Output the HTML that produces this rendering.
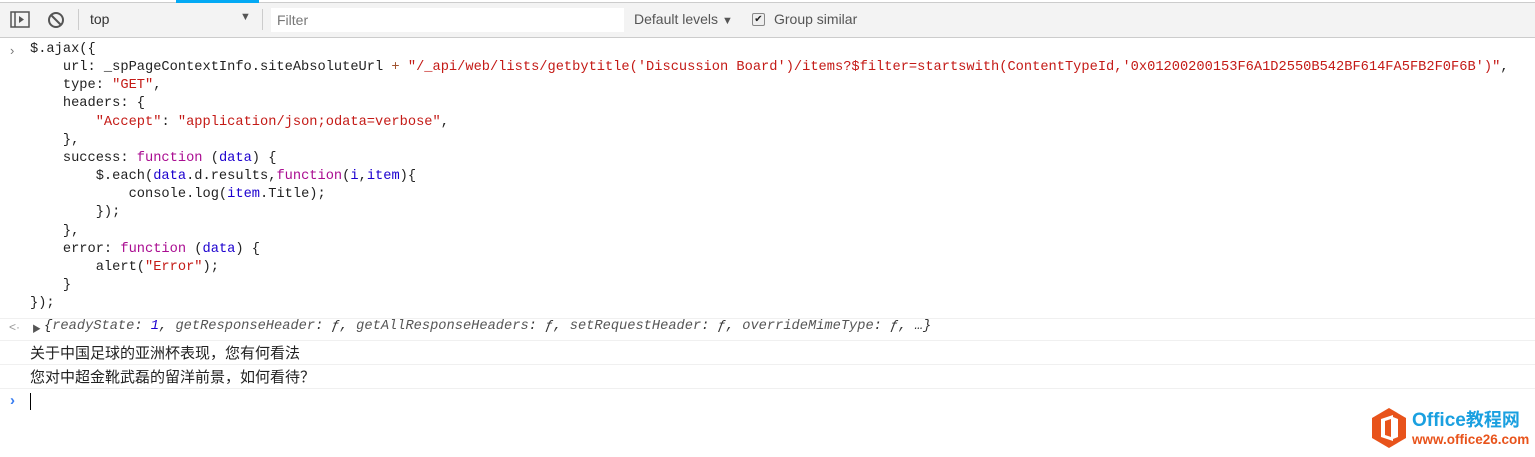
<!DOCTYPE html><html><head><meta charset="utf-8"><style>
body{margin:0;width:1535px;height:457px;background:#fff;overflow:hidden;font-family:"Liberation Sans","Noto Sans CJK SC",sans-serif;position:relative}
.tb{position:absolute;left:0;top:2px;width:1535px;height:34px;background:#f3f3f3;border-top:1px solid #ccc;border-bottom:1px solid #ccc}
.ab{position:absolute;white-space:nowrap}
.t{position:absolute;font-size:14px;color:#333}
pre{position:absolute;left:30px;top:41px;margin:0;font-family:"Liberation Mono",monospace;font-size:13.7px;line-height:18.15px;color:#222}
.s{color:#c41a16}.k{color:#aa0d91}.n{color:#1c00cf}
.row{position:absolute;left:0;width:1535px;border-top:1px solid #f0f0f0}
.cn{position:absolute;left:30px;font-size:15px;color:#222;font-family:"Noto Sans CJK SC",sans-serif;line-height:20px}
</style></head><body>
<div class="ab" style="left:176px;top:0;width:83px;height:3px;background:#03a9f4;z-index:2"></div>
<div class="tb">
<svg class="ab" style="left:10px;top:8px" width="20" height="18"><rect x="1" y="1" width="18" height="15" fill="none" stroke="#555" stroke-width="1.5"/><line x1="5" y1="1" x2="5" y2="16" stroke="#555" stroke-width="1.5"/><path d="M9 5l5 3.5-5 3.5z" fill="#555"/></svg>
<svg class="ab" style="left:47px;top:8px" width="18" height="18"><circle cx="9" cy="9" r="7" fill="none" stroke="#555" stroke-width="2"/><line x1="4" y1="4" x2="14" y2="14" stroke="#555" stroke-width="2"/></svg>
<div class="ab" style="left:78px;top:6px;width:1px;height:21px;background:#ccc"></div>
<div class="t" style="left:90px;top:8px">top</div>
<div class="t" style="left:240px;top:8px;font-size:11px;color:#555">▼</div>
<div class="ab" style="left:262px;top:6px;width:1px;height:21px;background:#ccc"></div>
<div class="ab" style="left:271px;top:5px;width:353px;height:24px;background:#fff"></div>
<div class="t" style="left:277px;top:9px;color:#777">Filter</div>
<div class="t" style="left:634px;top:8px;color:#555">Default levels <span style="font-size:11px">▼</span></div>
<div class="ab" style="left:752px;top:10px;width:11px;height:11px;border:1px solid #888;background:#eee;border-radius:2px;font-size:10px;line-height:11px;text-align:center;color:#222">✔</div>
<div class="t" style="left:774px;top:8px;color:#555">Group similar</div>
</div>
<div class="ab" style="left:10px;top:43px;color:#777;font-size:13px">›</div>
<pre>$.ajax({
    url: _spPageContextInfo.siteAbsoluteUrl <span style="color:#a0522d">+</span> <span class="s">"/_api/web/lists/getbytitle('Discussion Board')/items?$filter=startswith(ContentTypeId,'0x01200200153F6A1D2550B542BF614FA5FB2F0F6B')"</span>,
    type: <span class="s">"GET"</span>,
    headers: {
        <span class="s">"Accept"</span>: <span class="s">"application/json;odata=verbose"</span>,
    },
    success: <span class="k">function</span> (<span class="n">data</span>) {
        $.each(<span class="n">data</span>.d.results,<span class="k">function</span>(<span class="n">i</span>,<span class="n">item</span>){
            console.log(<span class="n">item</span>.Title);
        });
    },
    error: <span class="k">function</span> (<span class="n">data</span>) {
        alert(<span class="s">"Error"</span>);
    }
});</pre>
<div class="row" style="top:318px"></div>
<div class="ab" style="left:9px;top:320px;color:#999;font-size:12px">&lt;·</div>
<div class="ab" style="left:32px;top:322px;font-size:9px;color:#555">▶</div>
<div class="ab" style="left:44px;top:319px;font-family:'Liberation Mono',monospace;font-size:13.7px;font-style:italic;color:#333">{<span style="color:#565656">readyState</span>: <span class="n">1</span>, <span style="color:#565656">getResponseHeader</span>: ƒ, <span style="color:#565656">getAllResponseHeaders</span>: ƒ, <span style="color:#565656">setRequestHeader</span>: ƒ, <span style="color:#565656">overrideMimeType</span>: ƒ, …}</div>
<div class="row" style="top:340px"></div>
<div class="cn" style="top:343px">关于中国足球的亚洲杯表现，您有何看法</div>
<div class="row" style="top:364px"></div>
<div class="cn" style="top:367px">您对中超金靴武磊的留洋前景，如何看待？</div>
<div class="row" style="top:388px"></div>
<div class="ab" style="left:10px;top:392px;color:#367cf1;font-size:15px;font-weight:bold">›</div>
<div class="ab" style="left:30px;top:393px;width:1px;height:17px;background:#000"></div>
<svg class="ab" style="left:1370px;top:407px" width="38" height="42"><path d="M19 1L36 11V31L19 41L2 31V11Z" fill="#e8531b"/><path d="M11 12L23 8V34L11 30Z" fill="#fff"/><path d="M15 14L21 12V30L15 28Z" fill="#e8531b"/><path d="M23 10L28 12V30L23 32Z" fill="#fff"/></svg>
<div class="ab" style="left:1412px;top:407px;font-size:19px;font-weight:bold;color:#1aa0e0;line-height:24px">Office<span style="font-family:'Noto Sans CJK SC',sans-serif;font-size:18px">教程网</span></div>
<div class="ab" style="left:1412px;top:432px;font-size:13.5px;font-weight:bold;color:#e8531b;line-height:16px">www.office26.com</div>
</body></html>
